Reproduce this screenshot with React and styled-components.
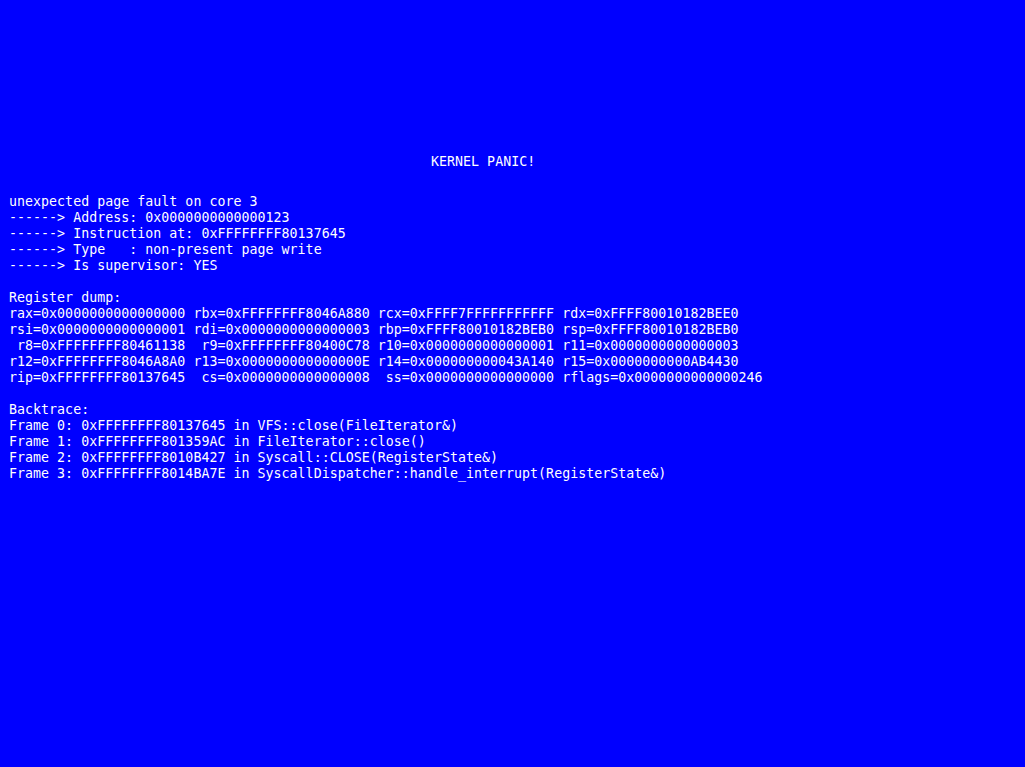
import React from 'react';
import styled, { createGlobalStyle } from 'styled-components';

const GlobalStyle = createGlobalStyle`
  html, body {
    margin: 0;
    padding: 0;
    background: #0000ff;
  }
`;

const Screen = styled.div`
  min-height: 100vh;
  box-sizing: border-box;
  background: #0000ff;
  color: #ffffff;
  font-family: 'DejaVu Sans Mono', 'Liberation Mono', monospace;
  font-size: 13.288px;
  letter-spacing: 0.03px;
  line-height: 16px;
  padding: 154px 8px 0 9px;
  display: flex;
  flex-direction: column;
`;

const Title = styled.div`
  padding-left: 422px;
  margin-bottom: 24px;
  white-space: pre;
`;

const Block = styled.div`
  display: flex;
  flex-direction: column;
  margin-bottom: 16px;
`;

const Line = styled.div`
  white-space: pre;
  height: 16px;
`;

const fault = [
  'unexpected page fault on core 3',
  '------> Address: 0x0000000000000123',
  '------> Instruction at: 0xFFFFFFFF80137645',
  '------> Type   : non-present page write',
  '------> Is supervisor: YES',
];

const registers = [
  'Register dump:',
  'rax=0x0000000000000000 rbx=0xFFFFFFFF8046A880 rcx=0xFFFF7FFFFFFFFFFF rdx=0xFFFF80010182BEE0',
  'rsi=0x0000000000000001 rdi=0x0000000000000003 rbp=0xFFFF80010182BEB0 rsp=0xFFFF80010182BEB0',
  ' r8=0xFFFFFFFF80461138  r9=0xFFFFFFFF80400C78 r10=0x0000000000000001 r11=0x0000000000000003',
  'r12=0xFFFFFFFF8046A8A0 r13=0x000000000000000E r14=0x000000000043A140 r15=0x0000000000AB4430',
  'rip=0xFFFFFFFF80137645  cs=0x0000000000000008  ss=0x0000000000000000 rflags=0x0000000000000246',
];

const backtrace = [
  'Backtrace:',
  'Frame 0: 0xFFFFFFFF80137645 in VFS::close(FileIterator&)',
  'Frame 1: 0xFFFFFFFF801359AC in FileIterator::close()',
  'Frame 2: 0xFFFFFFFF8010B427 in Syscall::CLOSE(RegisterState&)',
  'Frame 3: 0xFFFFFFFF8014BA7E in SyscallDispatcher::handle_interrupt(RegisterState&)',
];

const App = () => {
  return (
    <>
      <GlobalStyle />
      <Screen>
        <Title>KERNEL PANIC!</Title>
        {[fault, registers, backtrace].map((block, i) => (
          <Block key={i}>
            {block.map((text, j) => (
              <Line key={j}>{text}</Line>
            ))}
          </Block>
        ))}
      </Screen>
    </>
  );
};

export default App;
